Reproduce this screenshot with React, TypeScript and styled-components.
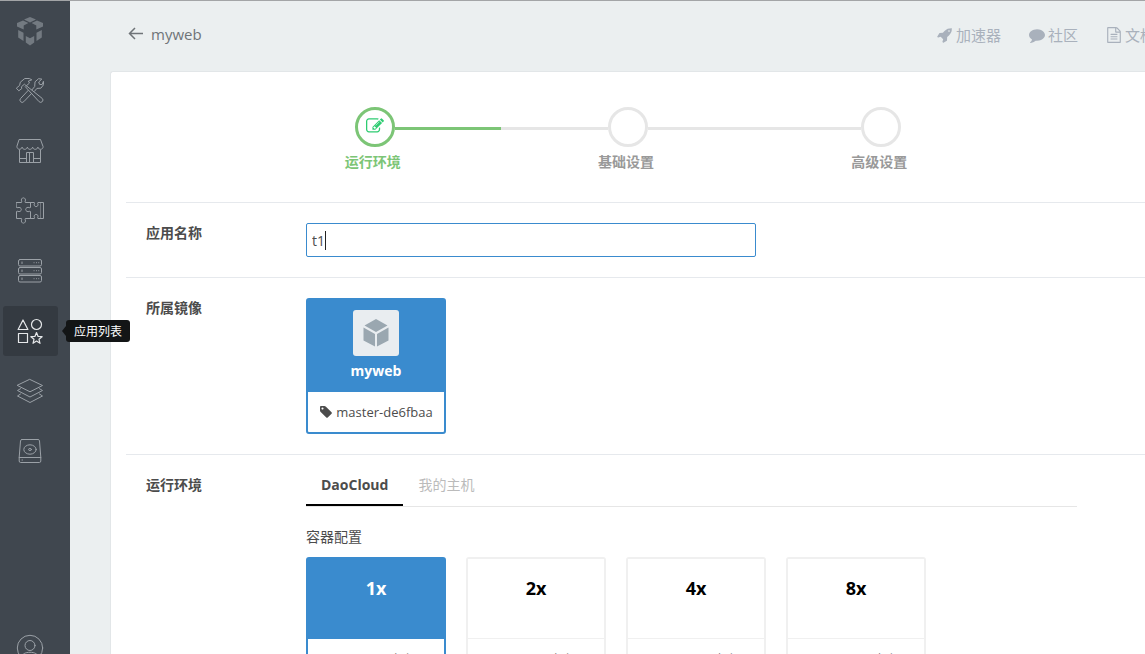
import React from "react";
import styled, { createGlobalStyle } from "styled-components";

const BLUE = "#3a8bce";
const GREEN = "#7cc576";
const FONT_STACK = '"Open Sans", "Noto Sans CJK SC", sans-serif';

const GlobalStyle = createGlobalStyle`
  *, *::before, *::after { box-sizing: border-box; }
  html, body { margin: 0; padding: 0; }
  body {
    background: #ebeff0;
    color: #4c4c4c;
    font-family: ${FONT_STACK};
    font-size: 14px;
    line-height: 20px;
  }
  button, input { font: inherit; color: inherit; }
  button { padding: 0; border: 0; background: none; cursor: pointer; }
  a { color: inherit; text-decoration: none; }
`;

const Shell = styled.div`
  display: flex;
  height: 100vh;
  overflow: hidden;
  border-top: 1px solid #a3a5a7;
`;

/* ---------- sidebar ---------- */

const Sidebar = styled.nav`
  display: flex;
  flex-direction: column;
  flex: none;
  gap: 10px;
  width: 70px;
  padding: 5px 3px 0;
  background: #40474f;
`;

const SideLink = styled.a<{ $active?: boolean; $brand?: boolean }>`
  position: relative;
  display: flex;
  flex: none;
  align-items: center;
  justify-content: center;
  width: 55px;
  height: 50px;
  padding-right: 1px;
  border-radius: 3px;
  color: ${(p) => (p.$active ? "#e6e8ea" : p.$brand ? "#737a81" : "#9ba1a7")};
  background: ${(p) => (p.$active ? "#343a41" : "transparent")};
`;

const AccountLink = styled(SideLink)`
  margin-top: auto;
  margin-bottom: -19px;
`;

const Tooltip = styled.span`
  position: absolute;
  z-index: 2;
  left: 63px;
  top: 14px;
  padding: 2px 8px 0;
  border-radius: 3px;
  background: #131516;
  color: #fff;
  font-size: 12px;
  white-space: nowrap;

  &::before {
    content: "";
    position: absolute;
    left: -4px;
    top: 6px;
    border: solid transparent;
    border-width: 5px 4px 5px 0;
    border-right-color: #131516;
  }
`;

const Line = styled.svg.attrs({
  width: 28,
  height: 28,
  viewBox: "0 0 28 28",
  fill: "none",
  stroke: "currentColor",
  strokeLinejoin: "round",
  strokeLinecap: "round",
  "aria-hidden": true,
})`
  display: block;
`;

/* ---------- header ---------- */

const Main = styled.main`
  display: flex;
  flex: 1;
  flex-direction: column;
  min-width: 0;
  padding-left: 40px;
  overflow: hidden auto;
  scrollbar-width: none;
`;

const Header = styled.header`
  display: flex;
  flex: none;
  align-items: center;
  justify-content: space-between;
  height: 70px;
  padding: 0 0 2px 18px;
  font-size: 15px;
`;

const Back = styled.a`
  display: flex;
  align-items: center;
  gap: 7px;
  padding-bottom: 2px;
  color: #6f7478;
`;

const TopNav = styled.nav`
  display: flex;
  gap: 28px;
  margin-right: -10px;
  color: #a9b1bc;
`;

const TopLink = styled.a`
  display: flex;
  align-items: center;
  gap: 3px;
  white-space: nowrap;
`;

/* ---------- panel ---------- */

const Panel = styled.section`
  flex: 1 0 auto;
  padding-left: 15px;
  border: solid #e2e6e8;
  border-width: 1px 0 0 1px;
  border-top-left-radius: 3px;
  background: #fff;
`;

const Steps = styled.ol`
  display: flex;
  width: 760px;
  margin: 0 auto;
  padding: 35px 15px 30px 0;
  box-sizing: content-box;
  list-style: none;
`;

const Step = styled.li`
  flex: 1;
`;

const Track = styled.div`
  display: flex;
`;

const Bar = styled.span<{ $tone: "done" | "idle" | "none" }>`
  flex: 1;
  height: 3px;
  margin-top: 20px;
  background: ${(p) => ({ done: GREEN, idle: "#e6e6e6", none: "transparent" })[p.$tone]};
`;

const Dot = styled.span<{ $active?: boolean }>`
  display: flex;
  align-items: center;
  justify-content: center;
  width: 40px;
  height: 40px;
  padding-bottom: 2px;
  border: 3px solid ${(p) => (p.$active ? GREEN : "#e6e6e6")};
  border-radius: 50%;
  color: #2ecc71;
`;

const StepLabel = styled.div<{ $active?: boolean }>`
  margin-top: 5px;
  padding-right: 4px;
  color: ${(p) => (p.$active ? GREEN : "#999")};
  font-weight: 700;
  text-align: center;
`;

const Row = styled.div`
  display: flex;
  padding: 20px 68px 20px 20px;
  border-top: 1px solid #e6e9ed;
`;

const RowTitle = styled.div`
  flex: none;
  width: 160px;
  font-weight: 700;
`;

const RowBody = styled.div`
  flex: 1;
  min-width: 0;
`;

const InputWrap = styled.div`
  position: relative;
  max-width: 450px;
`;

const TextInput = styled.input`
  display: block;
  width: 100%;
  height: 34px;
  padding: 0 5px;
  border: 1px solid ${BLUE};
  border-radius: 2px;
  outline: none;
  background: #fff;
  caret-color: transparent;
`;

const Caret = styled.span`
  position: absolute;
  top: 8px;
  width: 1px;
  height: 19px;
  background: #222;
  pointer-events: none;
`;

const Card = styled.button<{ $active?: boolean }>`
  display: flex;
  flex-direction: column;
  align-items: stretch;
  width: 140px;
  border: 2px solid ${(p) => (p.$active ? BLUE : "#f0f0f0")};
  border-radius: 3px;
  background: #fff;
  text-align: center;
`;

const ImageHead = styled.span`
  display: flex;
  flex-direction: column;
  align-items: center;
  gap: 5px;
  height: 92px;
  padding-top: 10px;
  background: ${BLUE};
  color: #fff;
  font-weight: 700;
`;

const Thumb = styled.span`
  display: flex;
  align-items: center;
  justify-content: center;
  width: 46px;
  height: 46px;
  border-radius: 3px;
  background: #e9edf0;
`;

const ImageTag = styled.span`
  display: flex;
  align-items: center;
  justify-content: center;
  gap: 3px;
  height: 40px;
  font-size: 13px;
`;

const Tabs = styled.div`
  display: flex;
  border-bottom: 1px solid #e6e6e6;
`;

const Tab = styled.button<{ $active?: boolean }>`
  padding: 0 15px 9px;
  border-bottom: 2px solid ${(p) => (p.$active ? "#000" : "transparent")};
  color: ${(p) => (p.$active ? "#4c4c4c" : "#bbb")};
  font-weight: ${(p) => (p.$active ? 700 : 400)};
`;

const SubTitle = styled.div`
  margin: 20px 0 10px;
`;

const Plans = styled.div`
  display: flex;
  gap: 20px;
`;

const PlanHead = styled.span<{ $active?: boolean }>`
  height: 80px;
  padding-top: 17px;
  border-bottom: 1px solid ${(p) => (p.$active ? BLUE : "#f0f0f0")};
  background: ${(p) => (p.$active ? BLUE : "#fff")};
  color: ${(p) => (p.$active ? "#fff" : "#000")};
  font-size: 18px;
  font-weight: 700;
  line-height: 24px;
`;

const PlanInfo = styled.span`
  display: flex;
  justify-content: center;
  gap: 10px;
  padding: 10px 0;
  color: #888;
  font-size: 13px;
`;

/* ---------- glyphs ---------- */

const GLYPHS = {
  rocket:
    "M1440 448q0-40-28-68t-68-28-68 28-28 68 28 68 68 28 68-28 28-68zm224-288q0 249-75.5 430.5t-253.5 360.5q-81 80-195 176l-20 379q-2 16-16 26l-384 224q-7 4-16 4-12 0-23-9l-64-64q-13-14-8-32l85-276-281-281-276 85q-3 1-9 1-14 0-23-9l-64-64q-17-19-5-39l224-384q10-14 26-16l379-20q96-114 176-195 188-187 358-258t431-71q14 0 24 9.5t10 22.5z",
  comment:
    "M1792 896q0 174-120 321.5t-326 233-450 85.5q-70 0-145-8-198 175-460 242-49 14-114 22-17 2-30.5-9t-17.5-29v-1q-3-4-.5-12t2-10 4.5-9.5l6-9 7-8.5 8-9q7-8 31-34.5t34.5-38 31-39.5 32.5-51 27-59 26-76q-157-89-247.5-220t-90.5-281q0-130 71-248.5t191-204.5 286-136.5 348-50.5q244 0 450 85.5t326 233 120 321.5z",
  file:
    "M1596 380q28 28 48 76t20 88v1152q0 40-28 68t-68 28h-1344q-40 0-68-28t-28-68v-1600q0-40 28-68t68-28h896q40 0 88 20t76 48zm-444-244v376h376q-10-29-22-41l-313-313q-12-12-41-22zm384 1528v-1024h-416q-40 0-68-28t-28-68v-416h-768v1536h1280zm-1024-864q0-14 9-23t23-9h704q14 0 23 9t9 23v64q0 14-9 23t-23 9h-704q-14 0-23-9t-9-23v-64zm736 224q14 0 23 9t9 23v64q0 14-9 23t-23 9h-704q-14 0-23-9t-9-23v-64q0-14 9-23t23-9h704zm0 256q14 0 23 9t9 23v64q0 14-9 23t-23 9h-704q-14 0-23-9t-9-23v-64q0-14 9-23t23-9h704z",
  edit:
    "M888 1184l116-116-152-152-116 116v56h96v96h56zm440-720q-16-16-33 1l-350 350q-17 17-1 33t33-1l350-350q17-17 1-33zm80 594v190q0 119-84.5 203.5t-203.5 84.5h-832q-119 0-203.5-84.5t-84.5-203.5v-832q0-119 84.5-203.5t203.5-84.5h832q63 0 117 25 15 7 18 23 3 17-9 29l-49 49q-14 14-32 8-23-6-45-6h-832q-66 0-113 47t-47 113v832q0 66 47 113t113 47h832q66 0 113-47t47-113v-126q0-13 9-22l64-64q15-15 35-7t20 29zm-96-738l288 288-672 672h-288v-288zm444 132l-92 92-288-288 92-92q28-28 68-28t68 28l152 152q28 28 28 68t-28 68z",
  tag:
    "M576 448q0-53-37.5-90.5t-90.5-37.5-90.5 37.5-37.5 90.5 37.5 90.5 90.5 37.5 90.5-37.5 37.5-90.5zm1067 576q0 53-37 90l-491 492q-39 37-91 37-53 0-90-37l-715-716q-38-37-64.5-101t-26.5-117v-416q0-52 38-90t90-38h416q53 0 117 26.5t102 64.5l715 714q37 39 37 91z",
};

function Glyph({ name, size }: { name: keyof typeof GLYPHS; size: number }) {
  return (
    <svg width={size} height={size} viewBox="0 0 1792 1792" fill="currentColor" aria-hidden>
      <path d={GLYPHS[name]} />
    </svg>
  );
}

const Logo = () => (
  <svg width="28" height="30" viewBox="0 0 28 30" fill="currentColor" aria-hidden>
    <path d="M14 1l6 2.600-6 3-6-3zM7 4.500l5.400 2.500-4.700 2.500v4L1 10.500V7zM21 4.500l-5.400 2.500 4.700 2.500v4L27 10.500V7zM2.200 14l5.300 2.800v8.200l-5.300-3.500zM25.800 14l-5.300 2.800v8.200l5.300-3.500zM9.800 20l4.200 2.300 4.200-2.300v6.500L14 29.500l-4.200-3z" />
  </svg>
);

const Tools = () => (
  <Line>
    <path d="M12.300 13.300l-7.700 8.200a2.200 2.200 0 0 0 3.200 3.200l7.800-8.200M10.300 8.700l15.900 12.700a2.200 2.200 0 0 1-3.100 3.300L9.200 9.600" />
    <path d="M.6 11.500l2.200 2.300 3-2.300-.4-1.700 3-2.600 1.900 1.700 3.200-2.900-1.200-1.800 3.500-1.400-2.600-1.300H8.800L4.300 5.200 3.700 8z" />
    <path d="M16 12.800l2.700-3.300.3-4.700 3.600-3.100 3.200.4-3.100 2.900.9 2.400 2.600.2 1.200-3.300.2 3.400-2.700 3.500-4 .2-2.300 2.800" />
  </Line>
);

const Store = () => (
  <Line>
    <path d="M3.500 2.500h21l2.600 7.200c0 3.400-4.700 3.400-5.200.4-.6 3-4.700 3-5.300 0-.6 3-4.700 3-5.200 0-.6 3-4.700 3-5.300 0-.6 3-5.200 3-5.200-.4zM3.500 13v12.500h21V13M10.500 25.500v-10h7v10M13.500 15.500v10M3.500 21.500h7M17.500 21.500h7" />
  </Line>
);

const Puzzle = () => (
  <Line>
    <path d="M.5 5.500h5c.9-.9-1-2 .2-3.700a2 2 0 0 1 3.400 0c1.200 1.700-.7 2.800.2 3.700h5.200v5c-.9.900-2-1-3.700.2a2 2 0 0 0 0 3.600c1.700 1.200 2.800-.7 3.700.2v7H9.300c-.9.900 1 2-.2 3.700a2 2 0 0 1-3.400 0c-1.200-1.700.7-2.800-.2-3.700h-5v-7c.9-.9 2 .7 3.700-.2a2 2 0 0 0 0-3.600c-1.700-.9-2.800.7-3.700-.2z" />
    <path d="M14.500 5.500h3.800c.9.900-1 2 .2 3.300a2 2 0 0 0 3.200 0c1.200-1.300-.7-2.400.2-3.300h5.600v16h-5.600c-.9-.9 1-2-.2-3.300a2 2 0 0 0-3.200 0c-1.200 1.300.7 2.400-.2 3.300h-3.800" />
    <path d="M24.500 5.500v16" opacity=".5" />
  </Line>
);

const Servers = () => (
  <Line>
    {[2.5, 10.5, 18.5].map((y) => (
      <g key={y}>
        <rect x="2.500" y={y} width="23" height="6.500" rx="1.500" />
        <path d={`M6 ${y + 2.5}v1.500M18 ${y + 3.2}h.1M20.500 ${y + 3.2}h.1M22.700 ${y + 3.2}h.1`} />
      </g>
    ))}
  </Line>
);

const Shapes = () => (
  <Line strokeWidth="1.200">
    <path d="M7 3l4.900 9.500H2.100zM2.500 16.500h9v9h-9zM20.500 15.500l1.600 3.900 4 .3-3.100 2.600 1 4-3.500-2.200-3.500 2.200 1-4-3.100-2.600 4-.3z" />
    <circle cx="20.500" cy="7.500" r="5" />
  </Line>
);

const Layers = () => (
  <Line>
    <path d="M14 2.500l12.500 6L14 14.800 1.500 8.500zM4.500 11.700l-3 1.800L14 20l12.500-6.500-3-1.800M4.500 17l-3 2L14 25.500 26.500 19l-3-2" />
  </Line>
);

const Disk = () => (
  <Line>
    <path d="M6 2.500h16a1.500 1.500 0 0 1 1.500 1.300l1.300 16.500v3.700a1.500 1.500 0 0 1-1.500 1.500H4.700A1.500 1.500 0 0 1 3.200 24v-3.700L4.500 3.800A1.500 1.500 0 0 1 6 2.500zM3.200 20.500h21.600M6 23h.5" />
    <ellipse cx="14" cy="12.500" rx="6.200" ry="4.700" />
    <ellipse cx="14" cy="12.500" rx="1.500" ry="1" />
  </Line>
);

const Person = () => (
  <Line>
    <circle cx="14" cy="14" r="12.700" />
    <circle cx="14" cy="11.500" r="5" />
    <path d="M5.500 23.300c.5-3.500 4-5 8.500-5s8 1.500 8.500 5" />
  </Line>
);

const SIDE_ITEMS = [
  { label: "构建", Icon: Tools },
  { label: "镜像仓库", Icon: Store },
  { label: "服务集成", Icon: Puzzle },
  { label: "主机", Icon: Servers },
  { label: "应用列表", Icon: Shapes, active: true },
  { label: "Stack", Icon: Layers },
  { label: "Volume", Icon: Disk },
];

const PLANS = [
  { name: "1x", memory: "256MB" },
  { name: "2x", memory: "512MB" },
  { name: "4x", memory: "1024MB" },
  { name: "8x", memory: "2048MB" },
];

function measure(text: string) {
  const context = document.createElement("canvas").getContext("2d");
  if (!context) return 0;
  context.font = `14px ${FONT_STACK}`;
  return Math.round(context.measureText(text).width);
}

function NameInput() {
  const [value, setValue] = React.useState("t1");
  const [focused, setFocused] = React.useState(true);
  const [caret, setCaret] = React.useState(value.length);

  return (
    <InputWrap>
      <TextInput
        id="app-name"
        type="text"
        autoFocus
        value={value}
        onChange={(e) => setValue(e.target.value)}
        onSelect={(e) => setCaret(e.currentTarget.selectionEnd ?? value.length)}
        onFocus={() => setFocused(true)}
        onBlur={() => setFocused(false)}
      />
      {focused && <Caret style={{ left: 6 + measure(value.slice(0, caret)) }} />}
    </InputWrap>
  );
}

export default function App() {
  const [plan, setPlan] = React.useState("1x");

  return (
    <>
      <GlobalStyle />
      <Shell>
        <Sidebar>
          <SideLink href="#home" $brand aria-label="DaoCloud">
            <Logo />
          </SideLink>
          {SIDE_ITEMS.map(({ label, Icon, active }) => (
            <SideLink key={label} href="#section" $active={active} aria-label={label}>
              <Icon />
              {active && <Tooltip>{label}</Tooltip>}
            </SideLink>
          ))}
          <AccountLink href="#account" aria-label="账户">
            <Person />
          </AccountLink>
        </Sidebar>

        <Main>
          <Header>
            <Back href="#back">
              <svg width="16" height="16" viewBox="0 0 16 16" fill="none" stroke="currentColor" strokeWidth="1.500" aria-hidden>
                <path d="M15 7.500H1.500M7 2L1.500 7.500 7 13" />
              </svg>
              myweb
            </Back>
            <TopNav>
              <TopLink href="#speed">
                <Glyph name="rocket" size={16} />
                加速器
              </TopLink>
              <TopLink href="#community">
                <Glyph name="comment" size={16} />
                社区
              </TopLink>
              <TopLink href="#docs">
                <Glyph name="file" size={16} />
                文档
              </TopLink>
            </TopNav>
          </Header>

          <Panel>
            <Steps>
              <Step>
                <Track>
                  <Bar $tone="none" />
                  <Dot $active>
                    <Glyph name="edit" size={18} />
                  </Dot>
                  <Bar $tone="done" />
                </Track>
                <StepLabel $active>运行环境</StepLabel>
              </Step>
              <Step>
                <Track>
                  <Bar $tone="idle" />
                  <Dot />
                  <Bar $tone="idle" />
                </Track>
                <StepLabel>基础设置</StepLabel>
              </Step>
              <Step>
                <Track>
                  <Bar $tone="idle" />
                  <Dot />
                  <Bar $tone="none" />
                </Track>
                <StepLabel>高级设置</StepLabel>
              </Step>
            </Steps>

            <Row>
              <RowTitle as="label" htmlFor="app-name">应用名称</RowTitle>
              <RowBody>
                <NameInput />
              </RowBody>
            </Row>

            <Row>
              <RowTitle>所属镜像</RowTitle>
              <RowBody>
                <Card type="button" $active>
                  <ImageHead>
                    <Thumb>
                      <svg width="28" height="30" viewBox="0 0 28 30" fill="#9aa7b0" aria-hidden>
                        <path d="M14 1l11.500 6.500L14 14 2.500 7.500zM1.500 9.500L13 16v12.500L1.500 22.500zM26.500 9.500L15 16v12.500l11.500-6z" />
                      </svg>
                    </Thumb>
                    myweb
                  </ImageHead>
                  <ImageTag>
                    <Glyph name="tag" size={14} />
                    master-de6fbaa
                  </ImageTag>
                </Card>
              </RowBody>
            </Row>

            <Row>
              <RowTitle>运行环境</RowTitle>
              <RowBody>
                <Tabs role="tablist">
                  <Tab type="button" role="tab" aria-selected $active>DaoCloud</Tab>
                  <Tab type="button" role="tab" aria-selected={false}>我的主机</Tab>
                </Tabs>
                <SubTitle>容器配置</SubTitle>
                <Plans>
                  {PLANS.map(({ name, memory }) => (
                    <Card
                      key={name}
                      type="button"
                      $active={plan === name}
                      aria-pressed={plan === name}
                      onClick={() => setPlan(name)}
                    >
                      <PlanHead $active={plan === name}>{name}</PlanHead>
                      <PlanInfo>
                        <span>{memory}</span>
                        <span>内存</span>
                      </PlanInfo>
                    </Card>
                  ))}
                </Plans>
              </RowBody>
            </Row>
          </Panel>
        </Main>
      </Shell>
    </>
  );
}
